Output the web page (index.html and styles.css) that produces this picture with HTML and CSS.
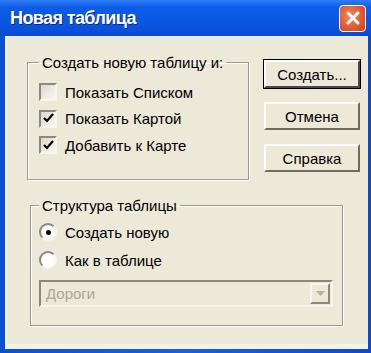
FILE: index.html
```html
<!DOCTYPE html>
<html lang="ru">
<head>
    <meta charset="UTF-8">
    <title>Новая таблица</title>
    <link rel="stylesheet" href="styles.css">
</head>
<body>
    <div class="window">
        <div class="titlebar">
            <span class="title">Новая таблица</span>
            <span class="close-btn">
                <svg width="16" height="16" viewBox="0 0 16 16">
                    <path d="M3 3 L13 13 M13 3 L3 13" stroke="#fff" stroke-width="3" stroke-linecap="round"/>
                </svg>
            </span>
        </div>
        <div class="client">
            <div class="top-row">
                <fieldset class="group group-create">
                    <legend>Создать новую таблицу и:</legend>
                    <div class="option">
                        <span class="check"></span>
                        <span>Показать Списком</span>
                    </div>
                    <div class="option">
                        <span class="check">
                            <svg width="11" height="11" viewBox="0 0 11 11"><path d="M1 5 L4 8 L10 1" fill="none" stroke="#000" stroke-width="2.2"/></svg>
                        </span>
                        <span>Показать Картой</span>
                    </div>
                    <div class="option">
                        <span class="check">
                            <svg width="11" height="11" viewBox="0 0 11 11"><path d="M1 5 L4 8 L10 1" fill="none" stroke="#000" stroke-width="2.2"/></svg>
                        </span>
                        <span>Добавить к Карте</span>
                    </div>
                </fieldset>
                <div class="buttons">
                    <button class="btn default">Создать...</button>
                    <button class="btn">Отмена</button>
                    <button class="btn">Справка</button>
                </div>
            </div>
            <fieldset class="group group-struct">
                <legend>Структура таблицы</legend>
                <div class="option">
                    <span class="radio"><span class="dot"></span></span>
                    <span>Создать новую</span>
                </div>
                <div class="option">
                    <span class="radio"></span>
                    <span>Как в таблице</span>
                </div>
                <div class="combo">
                    <span class="combo-text">Дороги</span>
                    <span class="combo-arrow">
                        <svg width="9" height="5" viewBox="0 0 9 5"><path d="M0 0 L9 0 L4.5 5 Z" fill="#b5b2a4"/></svg>
                    </span>
                </div>
            </fieldset>
        </div>
    </div>
</body>
</html>
```

FILE: styles.css
```css
body {
    margin: 0;
    font-family: "Liberation Sans", Arial, sans-serif;
    background: #0a52d8;
}

.window {
    width: 371px;
    height: 353px;
    display: flex;
    flex-direction: column;
    background: linear-gradient(to right, #0b4fd4, #1660e8 50%, #0a4ad0);
    box-sizing: border-box;
    padding: 0 3px 4px 5px;
}

.titlebar {
    height: 36px;
    flex: none;
    display: flex;
    align-items: center;
    justify-content: space-between;
    background: linear-gradient(to bottom, #2f7cf5 0%, #0c5de8 20%, #0a55e0 70%, #0b4bcf 100%);
    margin: 0 -3px 0 -5px;
    padding: 0 5px 0 10px;
}

.title {
    color: #fff;
    font-weight: bold;
    font-size: 18px;
    text-shadow: 1px 1px 0 #0a2a80;
    letter-spacing: -0.6px;
}

.close-btn {
    width: 25px;
    height: 25px;
    display: flex;
    align-items: center;
    justify-content: center;
    border: 1px solid #fff;
    border-radius: 4px;
    background: radial-gradient(circle at 40% 40%, #f08a64, #e0582c 60%, #c8401c);
}

.client {
    flex: 1;
    background: #ece9d8;
    border-bottom: 5px solid #f4f2e8;
    border-left: 2px solid #f8f7f0;
    display: flex;
    flex-direction: column;
    padding: 18px 6px 0 20px;
    font-size: 15px;
}

.top-row {
    display: flex;
    align-items: flex-start;
}

.group {
    margin: 0;
    border: 1px solid #9d9b90;
    box-shadow: 1px 1px 0 #fff, inset 1px 1px 0 #fff;
    padding: 0 0 0 11px;
}

.group legend {
    padding: 0 3px;
    margin-left: 0;
    color: #000;
}

.group-create {
    width: 222px;
    height: 126px;
    box-sizing: border-box;
    padding-top: 8px;
}

.option {
    display: flex;
    align-items: center;
    gap: 8px;
    height: 26.5px;
    color: #000;
}

.check,
.radio {
    width: 14px;
    height: 14px;
    flex: none;
    background: #fff;
    border: 2px solid;
    border-color: #8b887c #f6f5ee #f6f5ee #8b887c;
    display: flex;
    align-items: center;
    justify-content: center;
}

.check {
    background: linear-gradient(135deg, #dcdad0, #f8f7f2);
}

.radio {
    border-radius: 50%;
    background: #fff;
}

.dot {
    width: 5px;
    height: 5px;
    border-radius: 50%;
    background: #000;
}

.buttons {
    display: flex;
    flex-direction: column;
    gap: 14px;
    margin-left: 15px;
    margin-top: 6px;
}

.btn {
    width: 96px;
    height: 28px;
    font-family: inherit;
    font-size: 15px;
    background: #ece9d8;
    border: 2px solid;
    border-color: #fff #6f6c62 #6f6c62 #fff;
    color: #000;
    padding: 0;
}

.btn.default {
    outline: 1px solid #000;
    outline-offset: 0;
    border-color: #fff #4a483f #4a483f #fff;
}

.group-struct {
    margin-top: 17px;
    margin-left: 3px;
    width: 313px;
    height: 129px;
    box-sizing: border-box;
    padding: 4px 0 0 8px;
}

.group-struct .option {
    height: 28px;
}

.combo {
    margin-top: 6px;
    width: 294px;
    height: 27px;
    box-sizing: border-box;
    border: 2px solid;
    border-color: #8b887c #f6f5ee #f6f5ee #8b887c;
    background: #ece9d8;
    display: flex;
    align-items: center;
    justify-content: space-between;
}

.combo-text {
    color: #aca899;
    padding-left: 5px;
}

.combo-arrow {
    width: 20px;
    height: 21px;
    margin-right: 1px;
    box-sizing: border-box;
    border: 2px solid;
    border-color: #f6f5ee #8b887c #8b887c #f6f5ee;
    display: flex;
    align-items: center;
    justify-content: center;
}
```
